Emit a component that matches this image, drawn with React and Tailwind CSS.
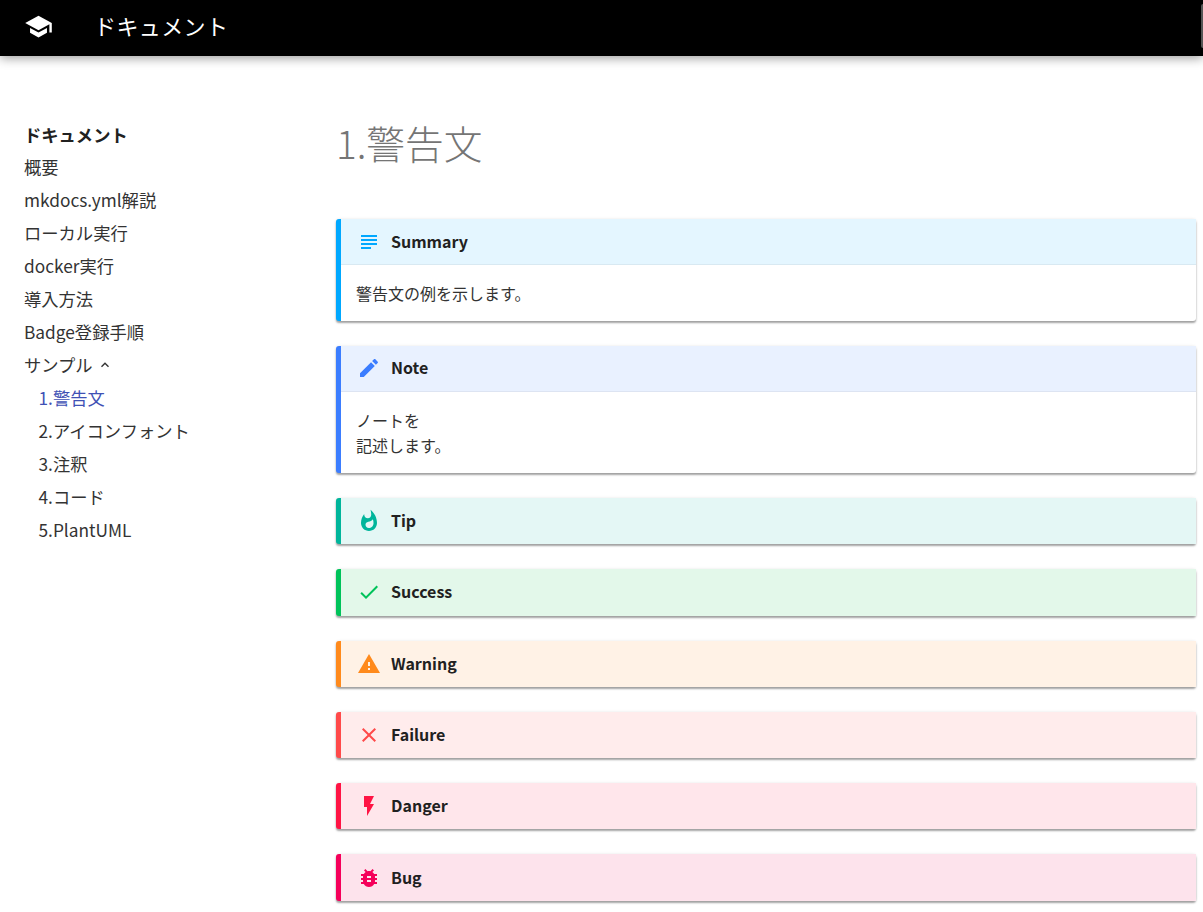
import React from "react";

const icons = {
  summary: "M14 17H4v2h10v-2zm6-8H4v2h16V9zM4 15h16v-2H4v2zM4 5v2h16V5H4z",
  note: "M20.71 7.04c.39-.39.39-1.04 0-1.41l-2.34-2.34c-.37-.39-1.02-.39-1.41 0l-1.84 1.83 3.75 3.75M3 17.25V21h3.75L17.81 9.93l-3.75-3.75L3 17.25z",
  tip: "M13.5.67s.74 2.65.74 4.8c0 2.06-1.35 3.73-3.41 3.73-2.07 0-3.63-1.67-3.63-3.73l.03-.36C5.21 7.51 4 10.62 4 14c0 4.42 3.58 8 8 8s8-3.58 8-8C20 8.61 17.41 3.8 13.5.67zM11.71 19c-1.78 0-3.22-1.4-3.22-3.14 0-1.62 1.05-2.76 2.81-3.12 1.77-.36 3.6-1.21 4.62-2.58.39 1.29.59 2.65.59 4.04 0 2.65-2.15 4.8-4.8 4.8z",
  success: "M9 16.17L4.83 12l-1.42 1.41L9 19 21 7l-1.41-1.41z",
  warning: "M1 21h22L12 2 1 21zm12-3h-2v-2h2v2zm0-4h-2v-4h2v4z",
  failure: "M19 6.41L17.59 5 12 10.59 6.41 5 5 6.41 10.59 12 5 17.59 6.41 19 12 13.41 17.59 19 19 17.59 13.41 12z",
  danger: "M7 2v11h3v9l7-12h-4l4-8z",
  bug: "M20 8h-2.81c-.45-.78-1.07-1.45-1.82-1.96L17 4.41 15.59 3l-2.17 2.17C12.96 5.06 12.49 5 12 5c-.49 0-.96.06-1.41.17L8.41 3 7 4.41l1.62 1.63C7.88 6.55 7.26 7.22 6.81 8H4v2h2.09c-.05.33-.09.66-.09 1v1H4v2h2v1c0 .34.04.67.09 1H4v2h2.81c1.04 1.79 2.97 3 5.19 3s4.15-1.21 5.19-3H20v-2h-2.09c.05-.33.09-.66.09-1v-1h2v-2h-2v-1c0-.34-.04-.67-.09-1H20V8zm-6 8h-4v-2h4v2zm0-4h-4v-2h4v2z",
  school: "M5 13.18v4L12 21l7-3.82v-4L12 17l-7-3.82zM12 3L1 9l11 6 9-4.91V17h2V9L12 3z",
};

const Icon = ({ name, className }) => (
  <svg viewBox="0 0 24 24" className={className} fill="currentColor">
    <path d={icons[name]} />
  </svg>
);

const Admonition = ({ title, icon, border, bg, color, children }) => (
  <div className={`rounded-[3px] border-l-[5px] bg-white shadow-[0_2px_2px_0_rgba(0,0,0,0.35),0_0_3px_0_rgba(0,0,0,0.1)] ${border}`}>
    <div className={`flex items-center pl-[16px] ${bg} ${children ? "h-[46px] border-b border-black/5" : "h-[46.3px]"}`}>
      <Icon name={icon} className={`h-[24px] w-[24px] ${color}`} />
      <span className="ml-[10px] pb-[2px] text-[16px] font-bold text-[#212121]">{title}</span>
    </div>
    {children && <div className="px-[15px] pb-[14px] pt-[16px] text-[16px] leading-[25.65px] text-[#333]">{children}</div>}
  </div>
);

const navItems = ["概要", "mkdocs.yml解説", "ローカル実行", "docker実行", "導入方法", "Badge登録手順"];
const subItems = ["2.アイコンフォント", "3.注釈", "4.コード", "5.PlantUML"];

export default function App() {
  return (
    <div className="h-screen overflow-hidden bg-white font-['Noto_Sans_CJK_JP','Noto_Sans',sans-serif]">
      <header className="relative flex h-[56px] items-center bg-black pb-[4px] pl-[24px] text-white shadow-[0_2px_10px_rgba(0,0,0,0.4)]">
        <Icon name="school" className="h-[29px] w-[29px]" />
        <span className="ml-[41px] pb-[2px] text-[22px] tracking-[0.4px]">ドキュメント</span>
        <div className="absolute right-0 top-[4px] h-[44px] w-[2px] rounded-l bg-[#555]" />
      </header>

      <div className="flex">
        <nav className="w-[336px] shrink-0 pl-[24px] pt-[62px] text-[17.3px] leading-[33px] text-[#333]">
          <div className="h-[32px] font-bold text-[#212121]">ドキュメント</div>
          {navItems.map((item) => (
            <div key={item}>{item}</div>
          ))}
          <div className="flex items-center">
            サンプル
            <svg viewBox="0 0 24 24" className="ml-[5px] h-[14px] w-[14px]" fill="none" stroke="currentColor" strokeWidth="2.4">
              <path d="M6 15l6-6 6 6" />
            </svg>
          </div>
          <div className="pl-[14.5px]">
            <div className="text-[#3f51b5]">1.警告文</div>
            {subItems.map((item) => (
              <div key={item}>{item}</div>
            ))}
          </div>
        </nav>

        <main className="w-[860px] pt-[58px]">
          <h1 className="mb-[49px] text-[38.7px] font-light leading-[56px] text-[#757575]">1.警告文</h1>
          <div className="flex flex-col gap-[25px]">
            <Admonition title="Summary" icon="summary" border="border-[#00a8ff]" bg="bg-[#e4f6ff]" color="text-[#00a8ff]">
              警告文の例を示します。
            </Admonition>
            <Admonition title="Note" icon="note" border="border-[#3b7dff]" bg="bg-[#e9f1ff]" color="text-[#3b7dff]">
              ノートを
              <br />
              記述します。
            </Admonition>
            <Admonition title="Tip" icon="tip" border="border-[#00b59b]" bg="bg-[#e4f7f5]" color="text-[#00b59b]" />
            <Admonition title="Success" icon="success" border="border-[#00c35a]" bg="bg-[#e3f8ea]" color="text-[#00c35a]" />
            <Admonition title="Warning" icon="warning" border="border-[#ff8a1c]" bg="bg-[#fff2e6]" color="text-[#ff8a1c]" />
            <Admonition title="Failure" icon="failure" border="border-[#ff4a4a]" bg="bg-[#ffecec]" color="text-[#ff4a4a]" />
            <Admonition title="Danger" icon="danger" border="border-[#ff1444]" bg="bg-[#ffe6eb]" color="text-[#ff1444]" />
            <Admonition title="Bug" icon="bug" border="border-[#f5005a]" bg="bg-[#fde3ec]" color="text-[#f5005a]" />
          </div>
        </main>
      </div>
    </div>
  );
}
